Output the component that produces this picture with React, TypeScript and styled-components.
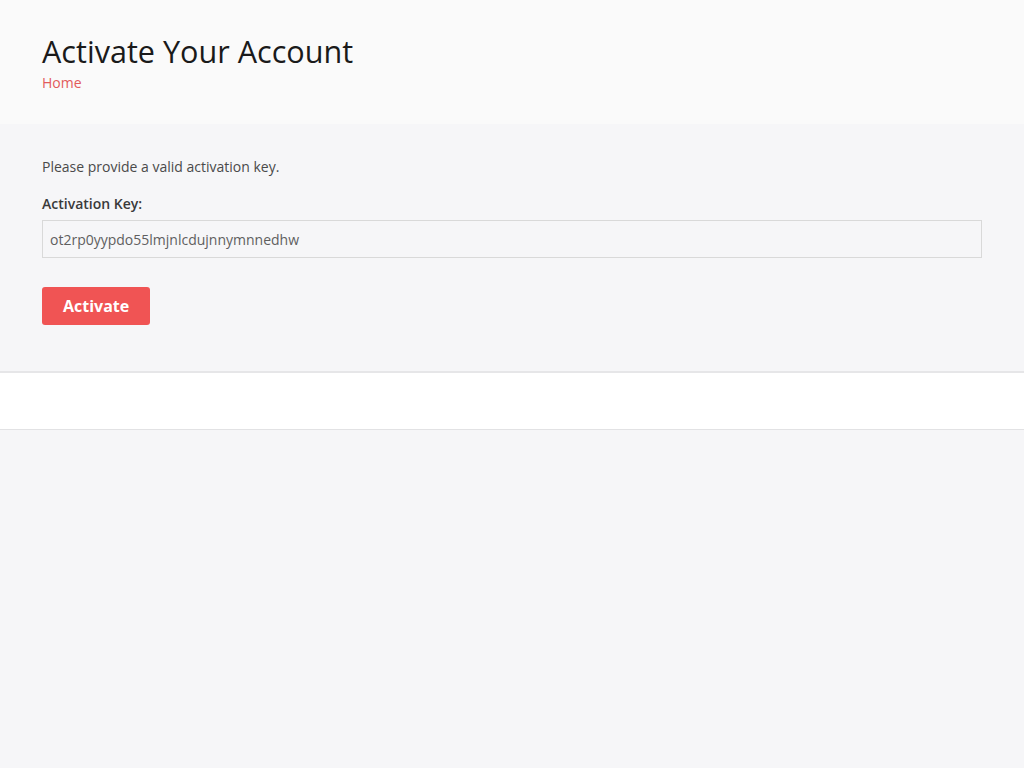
import React from 'react'
import styled, { createGlobalStyle } from 'styled-components'

const GlobalStyle = createGlobalStyle`
  html, body {
    margin: 0;
    padding: 0;
    background: #f6f6f8;
    font-family: 'Open Sans', 'Liberation Sans', sans-serif;
  }
`

const PageHeader = styled.header`
  background: #fafafa;
  height: 124px;
  box-sizing: border-box;
  padding: 32px 42px 0;
`

const Title = styled.h1`
  margin: 0;
  font-size: 30.6px;
  font-weight: 400;
  line-height: 38px;
  color: #1a1a1a;
`

const Crumb = styled.a`
  display: inline-block;
  margin-top: 3px;
  font-size: 14px;
  line-height: 20px;
  color: #e25b5b;
  text-decoration: none;
`

const Content = styled.main`
  background: #f6f6f8;
  padding: 33px 42px 46px;
  border-bottom: 2px solid #e6e6e8;
`

const Note = styled.p`
  margin: 0 0 17px;
  font-size: 14px;
  line-height: 20px;
  color: #4a4a4a;
`

const Label = styled.label`
  display: block;
  margin-bottom: 6px;
  font-size: 14px;
  font-weight: 600;
  line-height: 20px;
  color: #3a3a3a;
`

const KeyInput = styled.input`
  display: block;
  width: 100%;
  height: 38px;
  box-sizing: border-box;
  padding: 0 7px;
  border: 1px solid #d9d9d9;
  background: #f6f6f8;
  font-family: inherit;
  font-size: 14px;
  color: #5f5f5f;
  outline: none;
`

const Button = styled.button`
  margin-top: 29px;
  height: 38px;
  padding: 0 21px;
  border: none;
  border-radius: 3px;
  background: #f05454;
  color: #fff;
  font-family: inherit;
  font-size: 16px;
  font-weight: 700;
  cursor: pointer;
`

const Band = styled.div`
  height: 56px;
  background: #fff;
  border-bottom: 1px solid #e2e2e4;
`

export default function App() {
  return (
    <>
      <GlobalStyle />
      <PageHeader>
        <Title>Activate Your Account</Title>
        <Crumb href="#">Home</Crumb>
      </PageHeader>
      <Content>
        <Note>Please provide a valid activation key.</Note>
        <Label htmlFor="key">Activation Key:</Label>
        <KeyInput id="key" defaultValue="ot2rp0yypdo55lmjnlcdujnnymnnedhw" />
        <Button>Activate</Button>
      </Content>
      <Band />
    </>
  )
}
